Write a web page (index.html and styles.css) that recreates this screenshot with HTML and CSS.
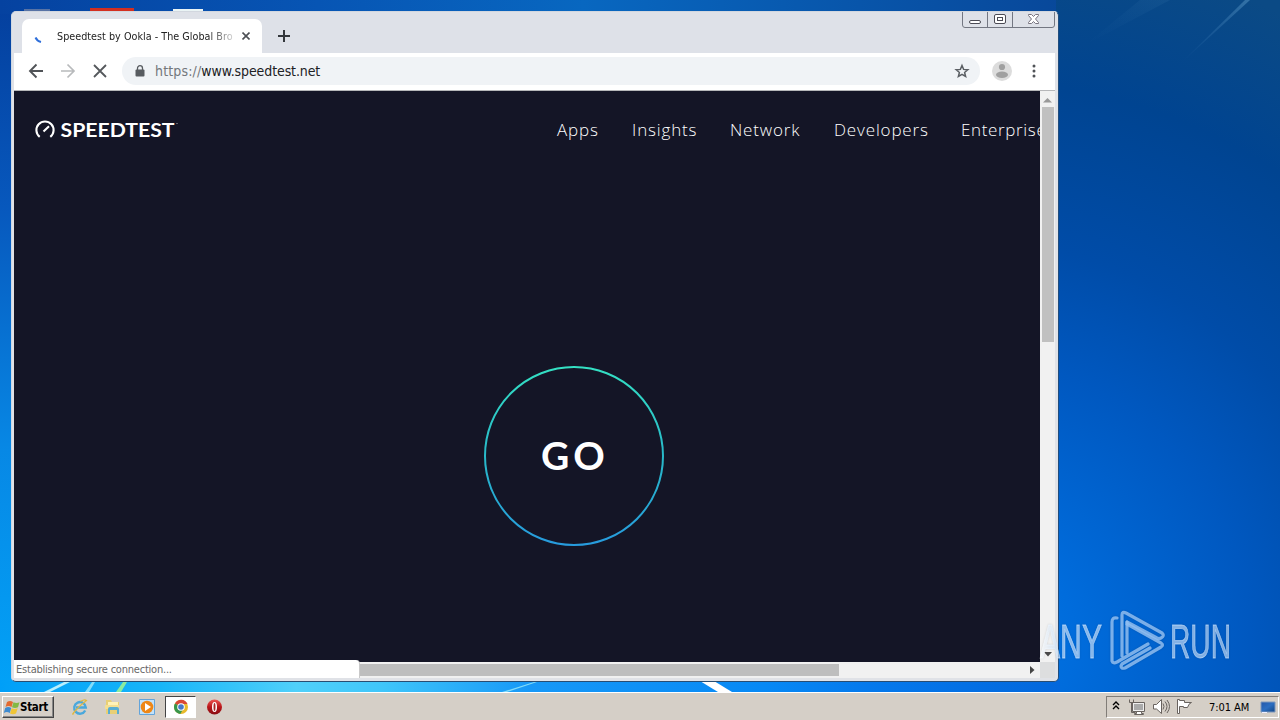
FILE: index.html
```html
<!DOCTYPE html>
<html lang="en">
<head>
<meta charset="utf-8">
<title>Speedtest by Ookla - The Global Broadband Speed Test</title>
<link rel="stylesheet" href="styles.css">
</head>
<body>
<div class="desktop">
  <svg class="wallpaper" viewBox="0 0 1280 692" preserveAspectRatio="none">
    <defs>
      <linearGradient id="left" x1="0" y1="0" x2="0" y2="1"><stop offset="0" stop-color="#043f9d"/><stop offset=".3" stop-color="#0758bd"/><stop offset=".65" stop-color="#0788e5"/><stop offset="1" stop-color="#02a2f7"/></linearGradient>
      <linearGradient id="top" x1="0" x2="1"><stop offset="0" stop-color="#0542a0"/><stop offset=".3" stop-color="#0755b4"/><stop offset=".55" stop-color="#0867c0"/><stop offset="1" stop-color="#08489a"/></linearGradient>
      <linearGradient id="bottom" x1="0" x2="1"><stop offset="0" stop-color="#009ff8"/><stop offset=".15" stop-color="#18b5f8"/><stop offset=".28" stop-color="#50d0fa"/><stop offset=".36" stop-color="#40c6fa"/><stop offset=".5" stop-color="#1798f7"/><stop offset=".72" stop-color="#0789f5"/><stop offset=".82" stop-color="#0579ec"/><stop offset="1" stop-color="#0367dc"/></linearGradient>
      <radialGradient id="right" gradientUnits="userSpaceOnUse" cx="970" cy="640" r="700"><stop offset="0" stop-color="#0078e4"/><stop offset=".15" stop-color="#006cdc"/><stop offset=".4" stop-color="#0058c0"/><stop offset=".57" stop-color="#004ca8"/><stop offset=".8" stop-color="#004491"/><stop offset="1" stop-color="#0b4a85"/></radialGradient>
      <linearGradient id="ray" x1="0" y1="1" x2="1" y2="0"><stop offset="0" stop-color="#3b79b6" stop-opacity="0"/><stop offset="1" stop-color="#5c9ac7" stop-opacity=".5"/></linearGradient>
    </defs>
    <rect width="14" height="692" fill="url(#left)"/>
    <rect width="1060" height="14" fill="url(#top)"/>
    <rect x="1056" width="224" height="692" fill="url(#right)"/>
    <rect y="680" width="1060" height="12" fill="url(#bottom)"/>
    <path d="M1180 64L1245 0h5z" fill="url(#ray)"/>
    <path d="M1085 45L1140 0h30z" fill="url(#ray)" opacity=".2"/>
    <path d="M44 692l20-10h6l-20 10z" fill="#b9effd"/>
    <path d="M85 692l7-10h3l-6 10zM502 692l32-10h3l-30 10z" fill="#83dcf8"/>
    <path d="M116 692l7-10h4l-6 10z" fill="#8beb9f"/>
    <path d="M700 681h14l18 11h-14z" fill="#fff"/>
    <path d="M24 9h26v3H24z" fill="#5873a5"/>
    <path d="M90 8h44v4H90z" fill="#d32f20"/>
    <path d="M173 9h30v3h-30z" fill="#eaf4f5"/>
  </svg>

  <main class="window">
    <header class="tabstrip">
      <div class="tab">
        <svg class="spinner" width="16" height="16" viewBox="0 0 16 16"><path d="M2.500 5.500Q4 9 8 10" fill="none" stroke="#2f6fda" stroke-width="2"/></svg>
        <span class="tab-title">Speedtest by Ookla - The Global Bro</span>
        <svg class="tab-close" width="8" height="8" viewBox="0 0 8 8"><path d="M.5.5l7 7m0-7l-7 7" stroke="#4d5055" stroke-width="1.600"/></svg>
      </div>
      <svg class="plus" width="12" height="12" viewBox="0 0 12 12"><path d="M6 0v12M0 6h12" stroke="#34373c" stroke-width="2"/></svg>
      <div class="controls">
        <svg width="93" height="18" viewBox="0 0 93 18"><path d="M.5 0v13q0 2.500 2.500 2.500h87q2.500 0 2.500-2.500V0M25.500 0v15M50.500 0v15" fill="none" stroke="#737782"/><rect x="7.500" y="8.500" width="11" height="3" rx="1.500" fill="#fff" stroke="#4b4b55"/><rect x="32.500" y="2.500" width="11" height="9" rx="1.500" fill="#fff" stroke="#4b4b55"/><rect x="35.500" y="5.500" width="5" height="3" fill="#fff" stroke="#4b4b55"/><path d="M66.500 2.500h3l2 2 2-2h3v1l-3 3.500 3 3.500v1h-3l-2-2-2 2h-3v-1l3-3.500-3-3.500z" fill="#fff" stroke="#77737f"/></svg>
      </div>
    </header>

    <nav class="toolbar">
      <svg class="history" width="80" height="16" viewBox="0 0 80 16"><path d="M15 8H2m6.500-6.500L2 8l6.500 6.500" fill="none" stroke="#505357" stroke-width="1.900"/><path d="M33 8h13m-6.500-6.500L46 8l-6.500 6.500" fill="none" stroke="#b8babc" stroke-width="1.700"/><path d="M66 2l12 12m0-12L66 14" stroke="#55585c" stroke-width="1.800"/></svg>
      <div class="omnibox">
        <svg width="10" height="12" viewBox="0 0 10 12"><path d="M2.500 5V3.200a2.500 2.500 0 0 1 5 0V5" fill="none" stroke="#585c60" stroke-width="1.300"/><rect x=".5" y="4.500" width="9" height="7" rx="1" fill="#585c60"/></svg>
        <span class="url"><span class="scheme">https://</span>www.speedtest.net</span>
        <svg class="star" width="16" height="16" viewBox="0 0 16 16"><path d="M8 2.500l1.600 3.900 4.200.3-3.200 2.700 1 4.100L8 11.300l-3.600 2.200 1-4.100-3.200-2.700 4.200-.3z" fill="none" stroke="#5b5f64" stroke-width="1.500"/></svg>
      </div>
      <svg class="avatar" width="20" height="20" viewBox="0 0 20 20"><circle cx="10" cy="10" r="10" fill="#dcdcdc"/><circle cx="10" cy="6" r="3.100" fill="#a0a0a0"/><ellipse cx="10" cy="13.800" rx="6" ry="3.200" fill="#a0a0a0"/></svg>
      <svg width="4" height="14" viewBox="0 0 4 14"><g fill="#505357"><circle cx="2" cy="2" r="1.500"/><circle cx="2" cy="7" r="1.500"/><circle cx="2" cy="12" r="1.500"/></g></svg>
    </nav>

    <div class="viewport">
      <section class="page">
        <div class="site-head">
          <svg class="logo" width="146" height="24" viewBox="0 0 146 24"><path d="M4.700 18.800a8.600 8.600 0 1 1 10.600 0M8.500 13.500l5.500-5.200" fill="none" stroke="#fff" stroke-width="2.100"/><text x="25.500" y="18.500" textLength="114" lengthAdjust="spacingAndGlyphs" class="logo-text">SPEEDTEST</text><circle cx="142" cy="5.500" r=".6" fill="#bbb"/></svg>
          <div class="site-nav"><a class="apps">Apps</a><a class="insights">Insights</a><a class="network">Network</a><a class="developers">Developers</a><a class="enterprise">Enterprise</a></div>
        </div>
        <svg class="go" width="182" height="182" viewBox="0 0 182 182"><defs><linearGradient id="ring" x1="0" y1="0" x2="0" y2="1"><stop offset="0" stop-color="#34e0c3"/><stop offset=".5" stop-color="#28b9c9"/><stop offset="1" stop-color="#279bdd"/></linearGradient></defs><circle cx="91" cy="91" r="89" fill="none" stroke="url(#ring)" stroke-width="2"/><text x="58" y="104.500" class="go-text">GO</text></svg>
      </section>
      <div class="vscroll">
        <svg width="9" height="5" viewBox="0 0 9 5"><path d="M0 4.500L4.500 0 9 4.500z" fill="#999"/></svg>
        <div class="vthumb"></div>
        <svg class="down" width="8" height="5" viewBox="0 0 8 5"><path d="M0 0h8L4 4.500z" fill="#4a4a4a"/></svg>
      </div>
    </div>
    <footer class="bottombar">
      <div class="status">Establishing secure connection...</div>
      <div class="hscroll"><div class="hthumb"></div><svg width="5" height="8" viewBox="0 0 5 8"><path d="M0 0l4.500 4L0 8z" fill="#454545"/></svg></div>
      <div class="corner"></div>
    </footer>
  </main>

  <svg class="watermark" width="200" height="66" viewBox="0 0 200 66">
    <defs><linearGradient id="mark" gradientUnits="userSpaceOnUse" x1="0" x2="196"><stop offset="0" stop-color="#fff" stop-opacity=".75"/><stop offset=".1" stop-color="#d5e9ff" stop-opacity=".65"/><stop offset="1" stop-color="#d5e9ff" stop-opacity=".6"/></linearGradient></defs>
    <text x="1" y="50" textLength="62" lengthAdjust="spacingAndGlyphs" fill="url(#mark)" stroke="url(#mark)" class="mark-text">ANY</text>
    <g fill="none" stroke="#8fbdf0" stroke-opacity=".85" stroke-width="3.200" stroke-linejoin="round" stroke-linecap="round"><path d="M83 48V7q0-4 4-2l36 20q3 3-1 5-2 1-4 0L88 14"/><path d="M78 10q-5-1-5 4v39q1 3 5 1l31-18M88 16l34 19q3 2 0 4L86 60q-4 1-4-2l1-2 28-16"/><path d="M88 14v31"/></g>
    <text x="131" y="50" textLength="61" lengthAdjust="spacingAndGlyphs" fill="url(#mark)" stroke="url(#mark)" class="mark-text">RUN</text>
  </svg>

  <footer class="taskbar">
    <div class="start"><svg width="18" height="17" viewBox="0 0 18 17"><path d="M4 3q3-2 6 0L8.500 8q-3-2-6 0z" fill="#e36a2f"/><path d="M10.500 3.200q3 1.500 6 0L15 8.300q-3 1.300-6 0z" fill="#83b943"/><path d="M2.200 9q3-2 6 0L6.800 14q-3-2-6 0z" fill="#3e8bd0"/><path d="M8.700 9.300q3 1.400 6 0L13 14.500q-3 1.300-6 0z" fill="#f0c536"/></svg><span>Start</span></div>
    <div class="launchers">
      <svg width="18" height="18" viewBox="0 0 18 18"><path d="M15.200 12.500A5.800 5.800 0 1 1 15.800 9.500H6" fill="none" stroke="#4aa8dc" stroke-width="2.400"/><path d="M4 15.500Q.5 18 6 12T16.500 2.500q-2-1.500-6 1" fill="none" stroke="#dfb842" stroke-width="1.200"/></svg>
      <svg width="18" height="18" viewBox="0 0 18 18"><path d="M2 2h5l1 2h7v12H2z" fill="#e8cf75"/><path d="M4 4h10v5H4z" fill="#fff2b7"/><path d="M1 7h14v4H1z" fill="#f4df91"/><path d="M4 16v-5q0-2 2-2h7q2 0 2 2v5h-2v-4H6v4z" fill="#58add2"/></svg>
      <svg width="18" height="18" viewBox="0 0 18 18"><path d="M1.500 1.500h15v15h-15z" fill="#c2e2fa" stroke="#63a4da"/><circle cx="9" cy="9" r="6.300" fill="#ee8716"/><path d="M7 5l6 4-6 4z" fill="#fff"/></svg>
      <div class="active-app"><svg width="16" height="16" viewBox="0 0 16 16"><circle cx="8" cy="8" r="7" fill="#e8b92b"/><path d="M8 8L2 4.400A7 7 0 0 1 14.500 5H8z" fill="#d94835"/><path d="M8 8L2 4.400A7 7 0 0 0 7.300 15L10.500 9.500z" fill="#38964b"/><circle cx="8" cy="8" r="3.800" fill="#fff"/><circle cx="8" cy="8" r="2.800" fill="#4679c8"/></svg></div>
      <svg width="18" height="18" viewBox="0 0 18 18"><defs><linearGradient id="opera" x2="0" y2="1"><stop stop-color="#ed5652"/><stop offset=".5" stop-color="#b9161a"/><stop offset="1" stop-color="#870d12"/></linearGradient></defs><circle cx="9.500" cy="9" r="7.500" fill="url(#opera)"/><ellipse cx="9.500" cy="9" rx="2.500" ry="5" fill="#fff"/><ellipse cx="9.500" cy="9" rx="1" ry="4" fill="#a92726"/></svg>
    </div>
    <div class="tray">
      <svg width="86" height="20" viewBox="0 0 86 20"><path d="M6 8l3-3 3 3M6 12l3-3 3 3" fill="none" stroke="#000" stroke-width="1.400"/><g stroke="#69635f"><path d="M25.500 5.500h12v9h-12z" fill="#eee"/><path d="M27 7h9v6h-9z" fill="#aaa" stroke="none"/><path d="M29.500 14.500v2h-2v1h9v-1h-2v-2z" fill="#fff"/><path d="M22.500 2.500v3h4v-3M24.500 6v9.500h4" fill="none"/><path d="M46.500 7.500h3l5-5v14l-5-4.500h-3z" fill="#fff"/><path d="M56 6.500q2 3 0 6M58 4.500q4 5 0 10M60 3q5 6.500 0 13" fill="none"/><path d="M70.500 16.500v-14h2v1h5v2h7q-3 1-4 5h-4v-1h-4v7z" fill="#fff"/></g></svg>
      <span class="clock">7:01 AM</span>
      <svg width="16" height="16" viewBox="0 0 16 16"><defs><linearGradient id="show" x2="1" y2="1"><stop stop-color="#2457a8"/><stop offset=".5" stop-color="#2c6ec1"/><stop offset="1" stop-color="#124585"/></linearGradient></defs><path d="M1 3h14v10H1z" fill="url(#show)" stroke="#7e98bc"/><path d="M2 13h5v1H2z" fill="#eef"/></svg>
    </div>
  </footer>
</div>
</body>
</html>
```

FILE: styles.css
```css
*{box-sizing:border-box}
body{margin:0;font-family:"DejaVu Sans Condensed","DejaVu Sans",sans-serif}
svg{display:block;flex:none}
.desktop{position:relative;width:1280px;height:720px;overflow:hidden;display:flex;flex-direction:column;justify-content:flex-end;background:#0859bf}
.wallpaper{position:absolute;left:0;top:0;width:1280px;height:692px}
.window{position:absolute;left:11px;top:11px;width:1048px;height:671px;border:1px solid #505f7c;border-color:#d2d7df #214d7d #294d72 #cfd8e3;border-radius:5px;background:#e0e2e7;padding:0 3px 3px 2px;overflow:hidden}
.tabstrip{height:41px;display:flex;align-items:flex-start;background:#dee1e8;width:1041px}
.tab{width:240px;height:34px;margin:7px 0 0 8px;border-radius:7px 7px 0 0;background:#fff;display:flex;align-items:center;padding:0 11px 0 9px}
.spinner{margin:7px 0 0 2px}
.tab-title{font-size:10.7px;white-space:nowrap;width:176px;margin-left:8px;color:#222;letter-spacing:.03px;-webkit-mask-image:linear-gradient(90deg,#000 86%,rgba(0,0,0,.2))}
.tab-close{margin-left:9px}
.plus{margin:18px 0 0 16px}
.controls{margin-left:auto;height:18px}
.toolbar{height:38px;width:1041px;background:#fff;border-bottom:1px solid #b6b7b9;display:flex;align-items:center;padding:0 18px 2px 14px}
.omnibox{width:858px;height:28px;border-radius:14px;margin-left:14px;background:#f0f3f6;display:flex;align-items:center;padding:0 10px 0 13px}
.url{font-size:14px;letter-spacing:-.1px;margin-left:10px;color:#202124}
.scheme{color:#73777c;letter-spacing:.15px}
.star{margin-left:auto}
.avatar{margin:0 20px 0 12px}
.viewport{height:571px;display:flex}
.page{width:1026px;height:571px;background:#141526;overflow:hidden}
.site-head{height:80px;display:flex;align-items:flex-start;padding:27px 0 0 21px}
.logo-text{font:700 19px "Lato",sans-serif;fill:#fff}
.site-nav{display:flex;margin-left:376px;color:#fff;font:300 17px/24px "Open Sans","Noto Sans",sans-serif;white-space:nowrap;letter-spacing:.85px}
.site-nav a{flex:none}
.apps{width:75px}.insights{width:98px}.network{width:104px}.developers{width:127px}.enterprise{width:90px;letter-spacing:.65px}
.go{margin:194px 0 0 469px}
.go-text{font:700 39px "Lato",sans-serif;fill:#fff;letter-spacing:4px}
.vscroll{width:15px;background:#f1f1f1;display:flex;flex-direction:column;align-items:center;padding:7px 0 5px}
.vthumb{width:12px;height:235px;margin-top:4px;background:#c0c0c0}
.down{margin-top:auto}
.bottombar{height:16px;width:1041px;display:flex;background:#f1f1f1}
.status{width:346px;height:18px;margin-top:-2px;padding:1px 0 0 2px;background:#fff;border-radius:0 4px 0 0;font-size:11px;line-height:18px;color:#686868;border-right:1px solid #c9c9c9;letter-spacing:-.22px}
.hscroll{width:680px;display:flex;align-items:center;padding-right:5px}
.hthumb{width:479px;height:12px;background:#bebebe}
.hscroll svg{margin-left:auto}
.corner{width:15px;background:#dddedf}
.watermark{position:absolute;left:1039px;top:608px;filter:drop-shadow(0 0 1px rgba(0,0,0,.15))}
.mark-text{font:400 49px "Liberation Sans",sans-serif;stroke-width:.8px}
.taskbar{position:relative;height:28px;background:#d5cfc7;box-shadow:inset 0 1px #fff;display:flex;align-items:center;padding:3px 1px 1px 2px}
.start{width:52px;height:22px;border:1px solid;border-color:#fff #444 #444 #fff;box-shadow:inset -1px -1px #888;display:flex;align-items:center;font-size:11.5px;font-weight:700;letter-spacing:-.3px}
.start svg{margin-right:-1px}
.launchers{height:24px;display:flex;align-items:center;gap:16px;margin-left:16px}
.active-app{width:31px;height:22px;margin:0 -7px 0 -7px;border:1px solid;border-color:#444 #fff #fff #444;background:#fff;display:flex;align-items:center;justify-content:center}
.tray{width:173px;height:22px;border:1px solid;border-color:#817d78 #fff #fff #817d78;margin-left:auto;display:flex;align-items:center}
.clock{font-size:11px;width:51px;margin-left:16px;letter-spacing:-.05px;white-space:nowrap}
```
